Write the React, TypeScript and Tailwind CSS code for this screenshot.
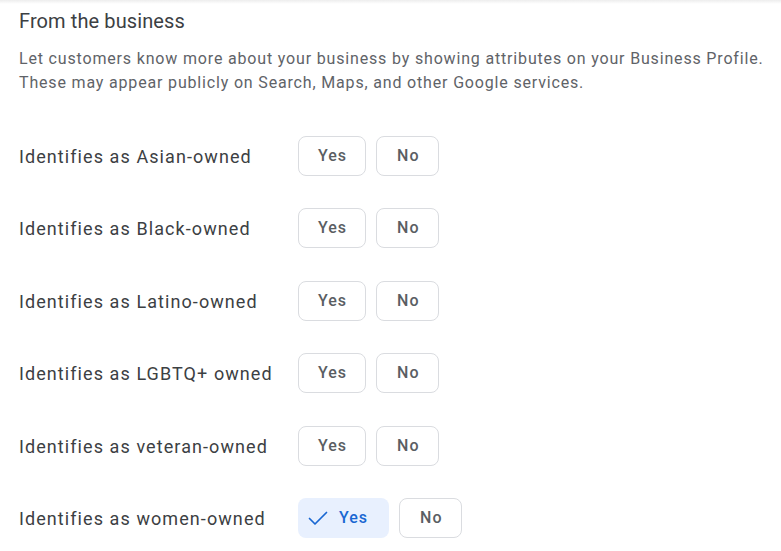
import React from "react";

const rows: { label: string; selected?: boolean }[] = [
  { label: "Identifies as Asian-owned" },
  { label: "Identifies as Black-owned" },
  { label: "Identifies as Latino-owned" },
  { label: "Identifies as LGBTQ+ owned" },
  { label: "Identifies as veteran-owned" },
  { label: "Identifies as women-owned", selected: true },
];

function Check() {
  return (
    <svg width="20" height="20" viewBox="0 0 20 20" fill="none">
      <path d="M1.5 10.5 L7 16 L18.5 4.5" stroke="#1967d2" strokeWidth="1.7" strokeLinecap="round" strokeLinejoin="round" />
    </svg>
  );
}

export default function App() {
  return (
    <div className="w-[781px] h-[551px] bg-white overflow-hidden relative" style={{ fontFamily: "Roboto, 'Liberation Sans', sans-serif" }}>
      <div className="absolute top-0 left-0 right-0 h-[4px] bg-gradient-to-b from-[#ededed] to-white" />
      <div className="px-[19px] pt-[7px]">
        <div className="text-[20px] leading-[28px] text-[#3c4043] tracking-[0.1px]">From the business</div>
        <div className="mt-3 text-[16px] leading-[24px] text-[#5f6368] whitespace-nowrap tracking-[0.83px]">
          Let customers know more about your business by showing attributes on your Business Profile.
          <br />
          These may appear publicly on Search, Maps, and other Google services.
        </div>
        <div className="mt-[41px] flex flex-col gap-[32.4px]">
          {rows.map((r) => (
            <div key={r.label} className="flex items-center h-10">
              <div className="w-[279px] text-[18px] text-[#3c4043] pt-[1px] tracking-[1.08px] whitespace-nowrap">{r.label}</div>
              <div className="flex gap-[10px] tracking-[1px]">
                {r.selected ? (
                  <button className="h-10 rounded-lg bg-[#e8f0fe] pl-[10px] pr-[21px] flex items-center gap-[11px] text-[16px] font-medium text-[#1967d2]">
                    <Check />
                    Yes
                  </button>
                ) : (
                  <button className="h-10 rounded-lg border border-[#dadce0] pl-[19px] pr-[18px] text-[16px] font-medium text-[#5a5e63]">
                    Yes
                  </button>
                )}
                <button className="h-10 rounded-lg border border-[#dadce0] pl-[20px] pr-[18px] text-[16px] font-medium text-[#5a5e63]">
                  No
                </button>
              </div>
            </div>
          ))}
        </div>
      </div>
    </div>
  );
}
